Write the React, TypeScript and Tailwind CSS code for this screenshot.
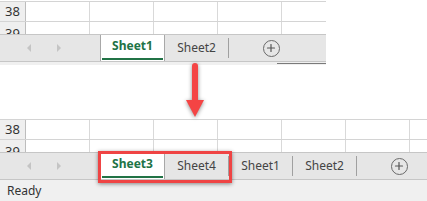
import { Plus } from 'lucide-react';

const font = { fontFamily: '"Noto Sans", "Open Sans", Arial, sans-serif' };

const GridRows = ({ cols }: { cols: number }) => {
    const cells = Array.from({ length: cols });
    return (
        <div className="flex flex-col border-t border-[#d4d4d4]">
            <div className="flex h-[20px] border-b border-[#d4d4d4]">
                <div className="w-[26px] shrink-0 bg-[#efefef] border-r border-[#bdbdbd] flex items-center justify-center text-[13px] text-[#333] pt-[1px]">38</div>
                {cells.map((_, i) => (
                    <div key={i} className="w-[64px] shrink-0 border-r border-[#d9d9d9]" />
                ))}
            </div>
            <div className="flex h-[12px] overflow-hidden">
                <div className="w-[26px] shrink-0 bg-[#efefef] border-r border-[#bdbdbd] flex justify-center text-[13px] leading-[16px] text-[#333] pt-[3px]">39</div>
                {cells.map((_, i) => (
                    <div key={i} className="w-[64px] shrink-0 border-r border-[#d9d9d9]" />
                ))}
            </div>
        </div>
    );
};

const NavArrows = () => (
    <div className="w-[100px] shrink-0 flex items-center h-full">
        <svg width="100" height="28" viewBox="0 0 100 28">
            <polygon points="31,10 31,18 27,14" fill="#c4c4c4" />
            <polygon points="57,10 57,18 61,14" fill="#c4c4c4" />
        </svg>
    </div>
);

const ActiveTab = ({ label }: { label: string }) => (
    <div className="w-[65px] shrink-0 h-[26px] -mt-[1px] bg-white border-x border-[#a8a8a8] flex flex-col">
        <div className="flex-1 flex items-center justify-center text-[12px] font-bold text-[#217346]">{label}</div>
        <div className="h-[2px] bg-[#217346] mx-[1px] mb-[1px]" />
    </div>
);

const Tab = ({ label, sep = true }: { label: string; sep?: boolean }) => (
    <div className="w-[64px] shrink-0 h-full flex items-center">
        <div className="flex-1 text-center text-[12px] text-[#444]">{label}</div>
        {sep && <div className="w-[1px] h-[20px] bg-[#a0a0a0]" />}
    </div>
);

const AddSheet = () => (
    <div className="w-[84px] shrink-0 h-full flex items-center justify-center">
        <div className="w-[17px] h-[17px] rounded-full border border-[#6a6a6a] flex items-center justify-center">
            <Plus className="w-[12px] h-[12px] text-[#555]" strokeWidth={2.4} />
        </div>
    </div>
);

export default function App() {
    return (
        <div className="relative w-[427px] h-[201px] bg-white overflow-hidden" style={font}>
            {/* before */}
            <div className="w-[326px] mt-[1px] flex flex-col overflow-hidden">
                <GridRows cols={5} />
                <div className="h-[28px] bg-[#e6e6e6] border-y border-[#c6c6c6] flex items-center">
                    <NavArrows />
                    <ActiveTab label="Sheet1" />
                    <Tab label="Sheet2" />
                    <AddSheet />
                </div>
                <div className="h-[3px] bg-[#f0f0f0] flex justify-end">
                    <div className="w-[49px] h-[1px] mt-[1px] bg-[#7a7a7a]" />
                </div>
            </div>

            {/* after */}
            <div className="mt-[54px] w-[427px] flex flex-col overflow-hidden">
                <GridRows cols={7} />
                <div className="h-[28px] bg-[#e6e6e6] border-y border-[#c6c6c6] flex items-center">
                    <NavArrows />
                    <ActiveTab label="Sheet3" />
                    <Tab label="Sheet4" />
                    <Tab label="Sheet1" />
                    <Tab label="Sheet2" />
                    <AddSheet />
                </div>
                <div className="h-[21px] bg-[#f0f0f0] flex items-center pl-[7px] text-[12px] text-[#333]">Ready</div>
            </div>

            {/* highlight box */}
            <div className="absolute left-[98px] top-[151px] w-[134px] h-[32px] border-[3px] border-[#ef4444] shadow-[0_1px_4px_rgba(0,0,0,0.45)]" />

            {/* arrow */}
            <svg className="absolute left-[183px] top-[61px] drop-shadow-[0_1px_2px_rgba(0,0,0,0.45)]" width="24" height="60" viewBox="0 0 24 60">
                <rect x="9" y="2" width="6" height="40" rx="3" fill="#f44444" />
                <polygon points="3,39 21,39 12,56" fill="#f44444" />
            </svg>
        </div>
    );
}
